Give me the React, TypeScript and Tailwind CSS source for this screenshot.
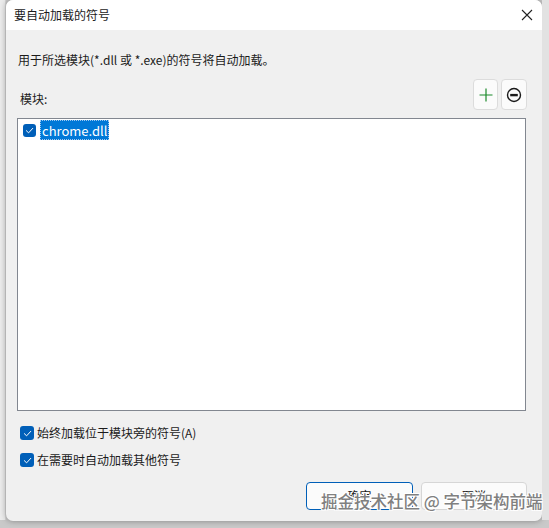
import React from "react";

const Check = ({ size = 13 }: { size?: number }) => (
  <span
    className="flex items-center justify-center rounded-[3px] bg-[#005fb8] shrink-0"
    style={{ width: size, height: size }}
  >
    <svg width="9" height="9" viewBox="0 0 10 10" fill="none">
      <path d="M1.5 5.2 L4 7.6 L8.6 2.6" stroke="white" strokeWidth="1.1" strokeLinecap="round" strokeLinejoin="round" />
    </svg>
  </span>
);

export default function App() {
  const font = { fontFamily: '"Noto Sans CJK SC", "Noto Sans", sans-serif' };
  return (
    <div className="relative w-[549px] h-[528px] overflow-hidden bg-[#c9c9c9]" style={font}>
      <div className="flex h-full">
        <div className="w-[6px] h-[520px] bg-[#ececec] border-r border-[#d5d5d5]" />
        <div className="w-[536px] h-[521px] rounded-[7px] bg-[#f0f0f0] shadow-[0_0_6px_rgba(0,0,0,0.35)] overflow-hidden flex flex-col text-[12px] text-[#1b1b1b]">
          <div className="h-[30px] bg-white flex items-center justify-between pl-[8px] pr-[9px]">
            <span className="text-[12px] leading-none">要自动加载的符号</span>
            <svg width="12" height="12" viewBox="0 0 12 12">
              <path d="M1 1 L11 11 M11 1 L1 11" stroke="#222" strokeWidth="1.1" />
            </svg>
          </div>
          <div className="flex flex-col pl-[11px] pr-[16px]">
            <div className="mt-[22px] pl-[1px] h-[16px] leading-[16px]">用于所选模块(*.dll 或 *.exe)的符号将自动加载。</div>
            <div className="mt-[11px] flex items-end justify-between h-[31px]">
              <span className="pl-[3px] pb-[3px] leading-[16px]">模块:</span>
              <div className="flex gap-[3px] mr-[-1px]">
                <div className="w-[25px] h-[31px] rounded-[4px] bg-[#fbfbfb] border border-[#dcdcdc] flex items-center justify-center">
                  <svg width="14" height="14" viewBox="0 0 14 14">
                    <path d="M7 0.5 V13.5 M0.5 7 H13.5" stroke="#1b8a2a" strokeWidth="1.2" />
                  </svg>
                </div>
                <div className="w-[26px] h-[31px] rounded-[4px] bg-[#fbfbfb] border border-[#dcdcdc] flex items-center justify-center">
                  <svg width="16" height="16" viewBox="0 0 16 16">
                    <circle cx="8" cy="8" r="6.5" fill="none" stroke="#1b1b1b" strokeWidth="1.4" />
                    <rect x="4.2" y="6.9" width="7.6" height="2.4" fill="#1b1b1b" />
                  </svg>
                </div>
              </div>
            </div>
            <div className="mt-[8px] h-[293px] bg-white border border-[#828790] pl-[5px] pt-[1px]">
              <div className="flex items-center h-[20px]">
                <Check />
                <span className="ml-[4px] h-[20px] px-[1px] bg-[#0078d7] text-white text-[13px] leading-[20px] border border-dotted border-[#9ec8f0]">chrome.dll</span>
              </div>
            </div>
            <div className="mt-[15px] flex items-center h-[14px] pl-[3px]">
              <Check size={14} />
              <span className="ml-[3px] leading-[14px]">始终加载位于模块旁的符号(A)</span>
            </div>
            <div className="mt-[13px] flex items-center h-[14px] pl-[3px]">
              <Check size={14} />
              <span className="ml-[3px] leading-[14px]">在需要时自动加载其他符号</span>
            </div>
            <div className="mt-[15px] flex justify-end gap-[8px] mr-[-1px]">
              <div className="w-[107px] h-[28px] rounded-[4px] bg-[#fbfbfb] border-[1.5px] border-[#005fb8] flex items-center justify-center">确定</div>
              <div className="w-[106px] h-[28px] rounded-[4px] bg-[#fbfbfb] border border-[#d6d6d6] flex items-center justify-center">取消</div>
            </div>
          </div>
        </div>
        <div className="flex-1 h-[520px] bg-[#e2e2e2]" />
      </div>
      <div
        className="absolute left-[321px] top-[491px] text-[16.5px] font-medium leading-[20px] text-[#808080] whitespace-nowrap"
        style={{ textShadow: "0 0 1px #fff, 1px 1px 0 #fff, -1px -1px 0 #fff, 1px -1px 0 #fff, -1px 1px 0 #fff" }}
      >
        掘金技术社区 @ 字节架构前端
      </div>
    </div>
  );
}
